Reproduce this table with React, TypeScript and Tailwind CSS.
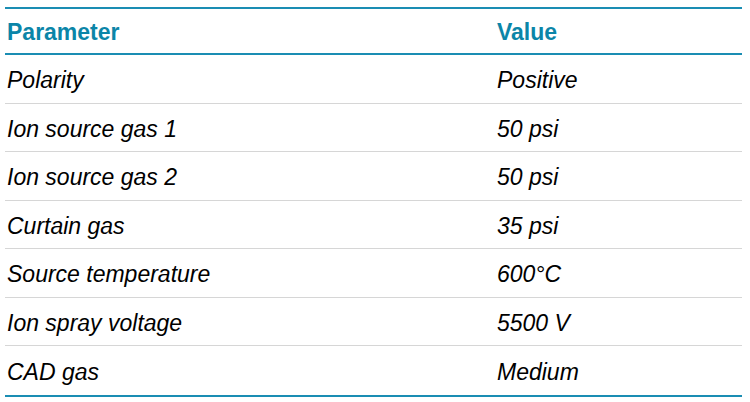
const rows = [
  { param: 'Polarity', value: 'Positive' },
  { param: 'Ion source gas 1', value: '50 psi' },
  { param: 'Ion source gas 2', value: '50 psi' },
  { param: 'Curtain gas', value: '35 psi' },
  { param: 'Source temperature', value: '600°C' },
  { param: 'Ion spray voltage', value: '5500 V' },
  { param: 'CAD gas', value: 'Medium' },
];

export default function App() {
  return (
    <div className="w-[750px] h-[402px] bg-white pt-[7px] pl-[5px]" style={{ fontFamily: '"Liberation Sans", Arial, sans-serif' }}>
      <div className="w-[737px] border-t-2 border-b-2 border-[#1a8db3]">
        {/* Header */}
        <div className="flex items-center h-[46px] pt-[2px] border-b-2 border-[#1a8db3] text-[23px] font-bold text-[#0b85a8]">
          <div className="w-[490px] pl-[2px]">Parameter</div>
          <div className="pl-[2px]">Value</div>
        </div>

        {/* Rows */}
        {rows.map((row, i) => (
          <div
            key={i}
            className={`flex items-center h-[48.5px] pt-[3px] text-[23px] italic text-black ${
              i < rows.length - 1 ? 'border-b border-[#d6d6d6]' : ''
            }`}
          >
            <div className="w-[490px] pl-[2px]">{row.param}</div>
            <div className="pl-[2px]">{row.value}</div>
          </div>
        ))}
      </div>
    </div>
  );
}
